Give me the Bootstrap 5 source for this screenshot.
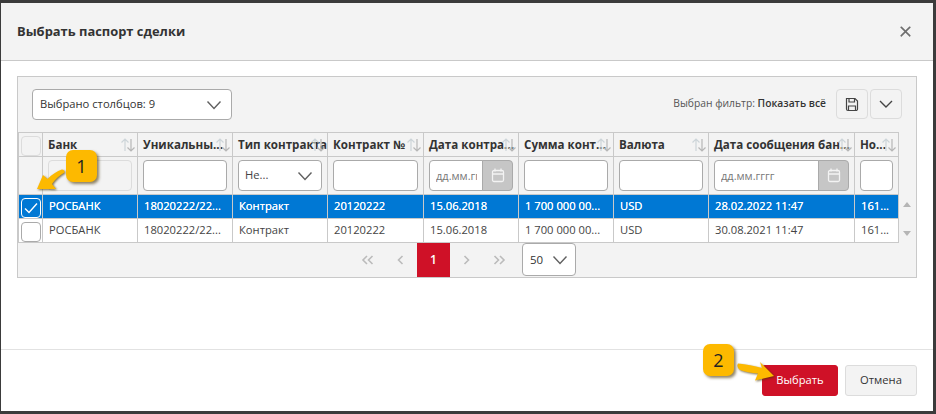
<!doctype html>
<html lang="ru">
<head>
<meta charset="utf-8">
<title>Выбрать паспорт сделки</title>
<link href="https://cdn.jsdelivr.net/npm/bootstrap@5.3.0/dist/css/bootstrap.min.css" rel="stylesheet">
<style>
html,body{height:100%;overflow:hidden}
body{background:#3b3b3b;font-family:"Open Sans","Noto Sans",sans-serif;font-size:12px;color:#333;padding:3px 3px 3px 1px}
.dlg{height:408px;border:0;border-radius:0;position:relative;background:#fff;width:932px}
.dlg .modal-header{background:#f3f3f3;height:58px;padding:0 16px;border-bottom:1px solid #c9c9c9;border-radius:0}
.dlg .modal-title{font-size:12.9px;font-weight:700;color:#333}
.dlg .btn-close{width:13px;height:13px;padding:0;margin:0 5px 0 0;background-size:13px;opacity:.55}
.dlg .modal-body{padding:15px 16px 0;flex:1 1 auto}
.dlg .modal-footer{height:62px;padding:15px 16px 0 0;border-top:1px solid #e2e2e2;gap:7px;align-items:flex-start}
.dlg .modal-footer>*{margin:0}
.panel-box{background:#f3f3f3;border:1px solid #c9c9c9;height:202px;width:900px;position:relative}
.tool-row{height:55px;padding:12px 14px 0 14px}
.form-select{background-image:url("data:image/svg+xml,%3csvg xmlns='http://www.w3.org/2000/svg' viewBox='0 0 16 12'%3e%3cpath fill='none' stroke='%23606060' stroke-width='1.400' d='M1.500 2.500l6.500 7 6.500-7'/%3e%3c/svg%3e")}
.tool-row .form-select.cols{width:200px;height:31px;font-size:11.2px;padding:0 30px 0 7px;color:#333;border-color:#aaa;border-radius:4px;background-position:right 9px center;background-size:16px 12px}
.filter-note{font-size:10.3px;color:#555;margin-right:8px;margin-top:-1px}
.filter-note b{color:#333;font-weight:600}
.tool-btn{width:32px;height:30px;padding:0;background:#f3f3f3;border:1px solid #dcdcdc;border-radius:4px;display:flex;align-items:center;justify-content:center}
.tool-gap{gap:2px}
.grid-tbl{table-layout:fixed;width:880px;border-collapse:collapse;margin:0;font-size:11.2px}
.grid-tbl td,.grid-tbl th{border:1px solid #c9c9c9;padding:0 5px;white-space:nowrap;overflow:hidden;text-overflow:ellipsis;vertical-align:middle;background:transparent;color:#444;font-weight:400}
.grid-tbl .hd-row th{height:24px;font-weight:700;font-size:11.6px;color:#333;position:relative;padding-right:0}
.grid-tbl .fl-row td{height:38px;padding:0 5px 0 5px}
.grid-tbl .dt-row td{height:24px;padding-left:6px;background:#fff}
.grid-tbl .dt-row.sel td{background:#0078d4;color:#fff;text-shadow:0 0 .4px #fff;border-color:#c9c9c9}
.grid-tbl .dt-row td.chk,.grid-tbl .hd-row th.chk{padding:0 0 0 1px;text-align:left;overflow:visible}
.w-chk{width:24px}.w-95{width:95px}.w-96{width:96px}.w-146{width:146px}.w-44{width:44px}
.sort-ic{position:absolute;right:1px;top:5px;width:16px;height:14px;fill:none;stroke-width:1.200}
.sort-ic .up{stroke:#cdd5d9}
.sort-ic .dn{stroke:#b7b7b7}
.grid-tbl .form-control,.grid-tbl .form-select{height:31px;font-size:11.2px;border-color:#aaa;border-radius:4px;padding:0 5px;color:#444;min-height:0}
.grid-tbl .form-control:disabled{background:#f3f3f3;border-color:#dcdcdc}
.grid-tbl .form-select{padding-left:6px;background-position:right 8px center;background-size:16px 12px}
.grid-tbl .form-control::placeholder{color:#777;opacity:1}
.grid-tbl .input-group{flex-wrap:nowrap;height:31px}
.grid-tbl .input-group .form-control{min-width:0;padding-left:6px;font-size:11px}
.cal-btn{width:31px;flex:0 0 31px;background:#c6c6c6;border:1px solid #aaa;border-radius:0 4px 4px 0;padding:0;justify-content:center;height:31px}
.chk-box.form-check-input{width:20px;height:20px;margin:2px 0 0 1px;border:1px solid #aaa;border-radius:4px;float:none;display:block}
.hd-row .chk-box.form-check-input{background:#f3f3f3;border-color:#dcdcdc}
.sel .chk-box.form-check-input{background-color:transparent;border-color:#fff;background-size:16px;background-image:url("data:image/svg+xml,%3csvg xmlns='http://www.w3.org/2000/svg' viewBox='0 0 16 16'%3e%3cpath fill='none' stroke='%23fff' stroke-width='1.400' d='M2 8.500l4 4 8-9'/%3e%3c/svg%3e")}
.pager-row{height:34px;position:relative;padding-right:7px}
.pager-row .pagination{margin:0}
.pager-row .page-item .page-link{width:33px;height:34px;padding:0;margin:0;display:flex;align-items:center;justify-content:center;background:transparent;border:0;color:#bbb;border-radius:0;font-size:12px;font-weight:600}
.pager-row .page-item.active .page-link{background:#cf1127;color:#fff}
.pager-row .page-item{margin:0}
.pager-row .per-page{width:54px;height:33px;font-size:11.5px;padding:0 4px 0 7px;margin-left:6px;color:#333;border-color:#aaa;border-radius:4px;background-position:right 7px center;background-size:16px 12px}
.scroll-up,.scroll-dn{position:absolute;left:885px;width:0;height:0;border-left:4px solid transparent;border-right:4px solid transparent}
.scroll-up{top:125px;border-bottom:5px solid #b5b5b5}
.scroll-dn{top:154px;border-top:5px solid #b5b5b5}
.btn-pick{background:#cf1127;border:1px solid #cf1127;color:#fff;font-size:11.2px;width:76px;height:31px;padding:0;border-radius:3px}
.btn-cancel{background:#f3f3f3;border:1px solid #dcdcdc;color:#333;font-size:11.2px;width:72px;height:31px;padding:0;border-radius:3px}
.callout{position:absolute;width:31px;height:32px;background:#fdb900;border-radius:7px;color:#222;font-size:18px;line-height:32px;text-align:center;box-shadow:2px 2px 3px rgba(70,50,0,.6);z-index:5}
.c-one{left:65px;top:147px}
.c-two{left:702px;top:341px}
.arrow-layer{position:absolute;left:-1px;top:-3px;width:936px;height:414px;pointer-events:none;z-index:4;filter:drop-shadow(1px 1px 1px rgba(70,50,0,.7))}
</style>
</head>
<body>
<div class="modal-content dlg">
  <div class="modal-header">
    <h5 class="modal-title">Выбрать паспорт сделки</h5>
    <button type="button" class="btn-close ms-auto" aria-label="Закрыть"></button>
  </div>
  <div class="modal-body">
    <div class="panel-box">
      <div class="tool-row d-flex align-items-start justify-content-between">
        <select class="form-select cols"><option>Выбрано столбцов: 9</option></select>
        <div class="d-flex align-items-center tool-gap">
          <span class="filter-note">Выбран фильтр: <b>Показать всё</b></span>
          <button type="button" class="tool-btn" aria-label="Сохранить">
            <svg width="14" height="15" viewBox="0 0 14 15" fill="none" stroke="#444" stroke-width="1.200"><path d="M1.500 1.500h8.500l2.500 2.500v8a1.500 1.500 0 0 1-1.500 1.500H3A1.500 1.500 0 0 1 1.500 12z"/><path d="M4 1.500v3.500h5.500V1.500M3.500 13.500V9h7v4.500"/></svg>
          </button>
          <button type="button" class="tool-btn" aria-label="Меню">
            <svg width="14" height="8" viewBox="0 0 14 8" fill="none" stroke="#444" stroke-width="1.400"><path d="M1 1l6 6 6-6"/></svg>
          </button>
        </div>
      </div>
      <table class="table grid-tbl">
        <colgroup>
          <col class="w-chk"><col class="w-95"><col class="w-95"><col class="w-95"><col class="w-96"><col class="w-95"><col class="w-95"><col class="w-95"><col class="w-146"><col class="w-44">
        </colgroup>
        <thead>
          <tr class="hd-row">
            <th class="chk"><input class="form-check-input chk-box" type="checkbox" aria-label="Все"></th>
            <th>Банк<svg class="sort-ic" viewBox="0 0 16 14"><path class="up" d="M5 13V1M1.500 4.500L5 1l3.500 3.500"/><path class="dn" d="M11 1v12M7.500 9.500L11 13l3.500-3.500"/></svg></th>
            <th>Уникальны...<svg class="sort-ic" viewBox="0 0 16 14"><path class="up" d="M5 13V1M1.500 4.500L5 1l3.500 3.500"/><path class="dn" d="M11 1v12M7.500 9.500L11 13l3.500-3.500"/></svg></th>
            <th>Тип контракта<svg class="sort-ic" viewBox="0 0 16 14"><path class="up" d="M5 13V1M1.500 4.500L5 1l3.500 3.500"/><path class="dn" d="M11 1v12M7.500 9.500L11 13l3.500-3.500"/></svg></th>
            <th>Контракт №<svg class="sort-ic" viewBox="0 0 16 14"><path class="up" d="M5 13V1M1.500 4.500L5 1l3.500 3.500"/><path class="dn" d="M11 1v12M7.500 9.500L11 13l3.500-3.500"/></svg></th>
            <th>Дата контра...<svg class="sort-ic" viewBox="0 0 16 14"><path class="up" d="M5 13V1M1.500 4.500L5 1l3.500 3.500"/><path class="dn" d="M11 1v12M7.500 9.500L11 13l3.500-3.500"/></svg></th>
            <th>Сумма конт...<svg class="sort-ic" viewBox="0 0 16 14"><path class="up" d="M5 13V1M1.500 4.500L5 1l3.500 3.500"/><path class="dn" d="M11 1v12M7.500 9.500L11 13l3.500-3.500"/></svg></th>
            <th>Валюта<svg class="sort-ic" viewBox="0 0 16 14"><path class="up" d="M5 13V1M1.500 4.500L5 1l3.500 3.500"/><path class="dn" d="M11 1v12M7.500 9.500L11 13l3.500-3.500"/></svg></th>
            <th>Дата сообщения бан...<svg class="sort-ic" viewBox="0 0 16 14"><path class="up" d="M5 13V1M1.500 4.500L5 1l3.500 3.500"/><path class="dn" d="M11 1v12M7.500 9.500L11 13l3.500-3.500"/></svg></th>
            <th>Но...<svg class="sort-ic" viewBox="0 0 16 14"><path class="up" d="M5 13V1M1.500 4.500L5 1l3.500 3.500"/><path class="dn" d="M11 1v12M7.500 9.500L11 13l3.500-3.500"/></svg></th>
          </tr>
          <tr class="fl-row">
            <td></td>
            <td><input class="form-control" disabled aria-label="Банк"></td>
            <td><input class="form-control" aria-label="Уникальный"></td>
            <td><select class="form-select" aria-label="Тип"><option>Не...</option></select></td>
            <td><input class="form-control" aria-label="Контракт"></td>
            <td><div class="input-group"><input class="form-control" placeholder="дд.мм.гггг" aria-label="Дата контракта"><span class="input-group-text cal-btn"><svg width="14" height="15" viewBox="0 0 14 15" fill="none" stroke="#f3f3f3" stroke-width="1.300"><rect x="1.500" y="2.500" width="11" height="11" rx="1.500"/><path d="M4 .5v3M10 .5v3M1.500 6h11"/></svg></span></div></td>
            <td><input class="form-control" aria-label="Сумма"></td>
            <td><input class="form-control" aria-label="Валюта"></td>
            <td><div class="input-group"><input class="form-control" placeholder="дд.мм.гггг" aria-label="Дата сообщения"><span class="input-group-text cal-btn"><svg width="14" height="15" viewBox="0 0 14 15" fill="none" stroke="#f3f3f3" stroke-width="1.300"><rect x="1.500" y="2.500" width="11" height="11" rx="1.500"/><path d="M4 .5v3M10 .5v3M1.500 6h11"/></svg></span></div></td>
            <td><input class="form-control" aria-label="Номер"></td>
          </tr>
        </thead>
        <tbody>
          <tr class="dt-row sel">
            <td class="chk"><input class="form-check-input chk-box" type="checkbox" checked aria-label="Выбрать"></td>
            <td>РОСБАНК</td><td>18020222/22...</td><td>Контракт</td><td>20120222</td><td>15.06.2018</td><td>1 700 000 00...</td><td>USD</td><td>28.02.2022 11:47</td><td>161...</td>
          </tr>
          <tr class="dt-row">
            <td class="chk"><input class="form-check-input chk-box" type="checkbox" aria-label="Выбрать"></td>
            <td>РОСБАНК</td><td>18020222/22...</td><td>Контракт</td><td>20120222</td><td>15.06.2018</td><td>1 700 000 00...</td><td>USD</td><td>30.08.2021 11:47</td><td>161...</td>
          </tr>
        </tbody>
      </table>
      <span class="scroll-up"></span><span class="scroll-dn"></span>
      <div class="pager-row d-flex justify-content-center align-items-start">
        <ul class="pagination">
          <li class="page-item"><a class="page-link" href="#" aria-label="Первая"><svg width="13" height="10" viewBox="0 0 13 10" fill="none" stroke="#bbb" stroke-width="1.600"><path d="M6 1L2 5l4 4M11.500 1l-4 4 4 4"/></svg></a></li>
          <li class="page-item"><a class="page-link" href="#" aria-label="Назад"><svg width="7" height="10" viewBox="0 0 7 10" fill="none" stroke="#bbb" stroke-width="1.600"><path d="M5.500 1l-4 4 4 4"/></svg></a></li>
          <li class="page-item active"><a class="page-link" href="#">1</a></li>
          <li class="page-item"><a class="page-link" href="#" aria-label="Вперёд"><svg width="7" height="10" viewBox="0 0 7 10" fill="none" stroke="#bbb" stroke-width="1.600"><path d="M1.500 1l4 4-4 4"/></svg></a></li>
          <li class="page-item"><a class="page-link" href="#" aria-label="Последняя"><svg width="13" height="10" viewBox="0 0 13 10" fill="none" stroke="#bbb" stroke-width="1.600"><path d="M1.500 1l4 4-4 4M7 1l4 4-4 4"/></svg></a></li>
        </ul>
        <select class="form-select per-page" aria-label="На странице"><option>50</option></select>
      </div>
    </div>
  </div>
  <div class="modal-footer">
    <button type="button" class="btn btn-pick">Выбрать</button>
    <button type="button" class="btn btn-cancel">Отмена</button>
  </div>
  <div class="callout c-one">1</div>
  <div class="callout c-two">2</div>
  <svg class="arrow-layer" viewBox="0 0 936 414" aria-hidden="true">
    <path fill="#fdb900" d="M37 189L43 175L47.500 179C52 174.500 57 171 62 169.500Q65 170 64.500 172.500C59 175.500 55 179.500 52 184L56 189Z"/>
    <path fill="#fdb900" d="M774 376L755 380.500L758 373.500C751 373 745 372 740 370Q736 367 738 363.500C746 364 754 366 762 368L760 362Z"/>
  </svg>
</div>
</body>
</html>
